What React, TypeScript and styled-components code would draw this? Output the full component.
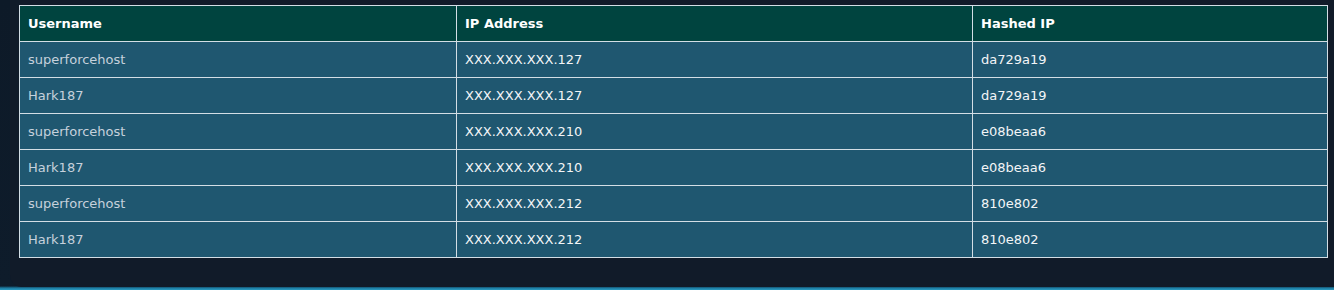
import styled, { createGlobalStyle } from "styled-components";

const GlobalStyle = createGlobalStyle`
    html, body {
        margin: 0;
        padding: 0;
        overflow: hidden;
    }
    body {
        height: 290px;
        font-family: "DejaVu Sans", Verdana, sans-serif;
        background: linear-gradient(to bottom, #0d1a28 0px, #0e1c2b 286px, #1c7aa0 288px, #2a9bc2 290px);
    }
`;

const Panel = styled.div`
    margin-left: 10px;
    width: 1340px;
    height: 287px;
    box-sizing: border-box;
    padding: 5px 0 0 9px;
    background-color: #111b29;
    border-bottom-left-radius: 12px;
`;

const Table = styled.table`
    width: 1309px;
    border-collapse: collapse;
    table-layout: fixed;
    font-size: 13px;
`;

const HeadCell = styled.th<{ width?: number }>`
    width: ${(props) => (props.width ? `${props.width}px` : "auto")};
    height: 35px;
    padding: 0 8px;
    text-align: left;
    font-weight: bold;
    color: #ffffff;
    background-color: #00443f;
    border: 1px solid #d3dee5;
`;

const Row = styled.tr`
    background-color: #1f5770;
`;

const Cell = styled.td<{ muted?: boolean }>`
    height: 35px;
    padding: 0 8px;
    color: ${(props) => (props.muted ? "#c6d1dc" : "#f3f5f7")};
    border: 1px solid #d3dee5;
    white-space: nowrap;
`;

interface Entry {
    username: string;
    ip: string;
    hash: string;
}

const entries: Entry[] = [
    { username: "superforcehost", ip: "XXX.XXX.XXX.127", hash: "da729a19" },
    { username: "Hark187", ip: "XXX.XXX.XXX.127", hash: "da729a19" },
    { username: "superforcehost", ip: "XXX.XXX.XXX.210", hash: "e08beaa6" },
    { username: "Hark187", ip: "XXX.XXX.XXX.210", hash: "e08beaa6" },
    { username: "superforcehost", ip: "XXX.XXX.XXX.212", hash: "810e802" },
    { username: "Hark187", ip: "XXX.XXX.XXX.212", hash: "810e802" },
];

function App() {
    return (
        <>
        <GlobalStyle />
        <Panel>
            <Table>
                <thead>
                    <tr>
                        <HeadCell width={420}>Username</HeadCell>
                        <HeadCell width={499}>IP Address</HeadCell>
                        <HeadCell>Hashed IP</HeadCell>
                    </tr>
                </thead>
                <tbody>
                    {entries.map((entry, i) => (
                        <Row key={i}>
                            <Cell muted>{entry.username}</Cell>
                            <Cell>{entry.ip}</Cell>
                            <Cell>{entry.hash}</Cell>
                        </Row>
                    ))}
                </tbody>
            </Table>
        </Panel>
        </>
    );
}
export default App;
